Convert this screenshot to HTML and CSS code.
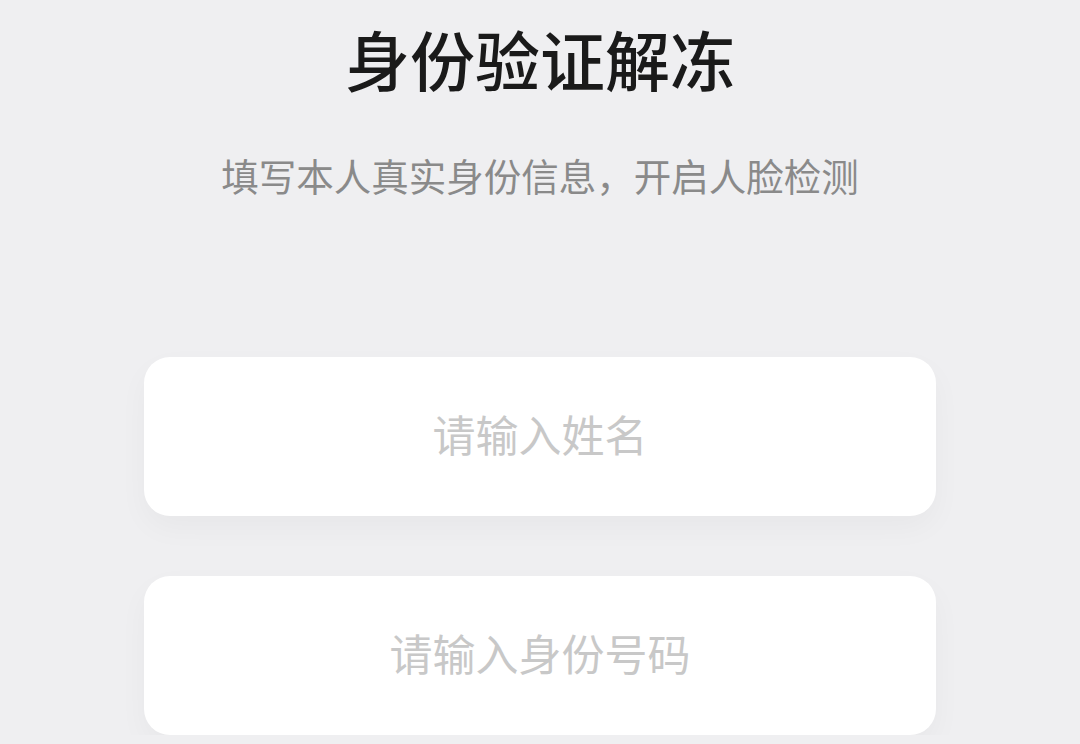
FILE: index.html
```html
<!DOCTYPE html>
<html lang="zh-CN">
<head>
    <meta charset="UTF-8">
    <meta name="viewport" content="width=device-width, initial-scale=1.0">
    <title>身份验证解冻</title>
    <link rel="stylesheet" href="styles.css">
</head>
<body>
    <main class="page">
        <h1 class="title">身份验证解冻</h1>
        <p class="subtitle">填写本人真实身份信息，开启人脸检测</p>
        <div class="form">
            <div class="field">
                <input type="text" id="nombre" placeholder="请输入姓名">
            </div>
            <div class="field">
                <input type="text" id="idnum" placeholder="请输入身份号码">
            </div>
        </div>
    </main>
</body>
</html>
```

FILE: styles.css
```css
body {
    font-family: "Noto Sans CJK SC", "Noto Sans", sans-serif;
    background-color: #efeff1;
    margin: 0;
    padding: 0;
}
.page {
    display: flex;
    flex-direction: column;
    align-items: center;
    padding-top: 18px;
}
.title {
    margin: 0;
    font-size: 65px;
    line-height: 80px;
    font-weight: 500;
    color: #1a1a1a;
}
.subtitle {
    margin: 52px 0 0;
    font-size: 37.5px;
    line-height: 50px;
    color: #8a8a8a;
}
.form {
    margin-top: 157px;
    display: flex;
    flex-direction: column;
    gap: 60px;
}
.field {
    width: 792px;
    height: 159px;
    background-color: #fff;
    border-radius: 26px;
    box-shadow: 0 12px 30px rgba(0, 0, 0, 0.035);
    display: flex;
}
.field input {
    flex: 1;
    border: none;
    outline: none;
    background: transparent;
    text-align: center;
    font-family: inherit;
    font-size: 43px;
    color: #333;
    padding: 0 0 8px;
}
.field input::placeholder {
    color: #c8c8c8;
}
```
